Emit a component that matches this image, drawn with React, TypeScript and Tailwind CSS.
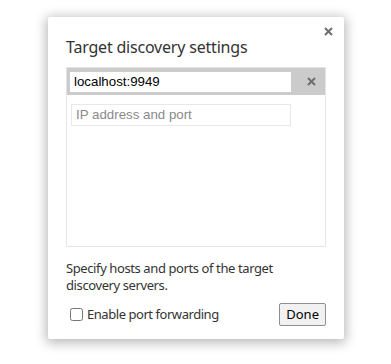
import React, { useState } from 'react';

const ui = { fontFamily: '"Noto Sans", "Open Sans", sans-serif' };
const arial = { fontFamily: '"Liberation Sans", Arial, sans-serif' };

export default function App() {
  const [forwarding, setForwarding] = useState(false);
  const [hosts, setHosts] = useState<string[]>(['localhost:9949']);

  return (
    <div className="w-[391px] h-[364px] bg-white pl-[48px] pt-[17px]" style={ui}>
      <div className="relative w-[296px] h-[322px] bg-white rounded-[2px] shadow-[0_2px_12px_2px_rgba(0,0,0,0.28)] px-[18px] pt-[20px]">
        <button className="absolute right-[10px] top-[8px] w-[12px] h-[12px] flex items-center justify-center text-[#6e6e6e]">
          <svg width="9" height="9" viewBox="0 0 9 9">
            <path d="M1 1 L8 8 M8 1 L1 8" stroke="currentColor" strokeWidth="2" />
          </svg>
        </button>
        <h2 className="text-[16px] leading-[20px] text-[#333] tracking-[-0.2px]">Target discovery settings</h2>
        <div className="mt-[10px] h-[180px] border border-[#e4e4e4]">
          {hosts.map((h, i) => (
            <div key={i} className="h-[27px] bg-[#cbcbcb] flex items-center pl-[3px]">
              <input
                value={h}
                onChange={(e) => setHosts(hosts.map((x, j) => (j === i ? e.target.value : x)))}
                className="w-[221px] h-[20px] bg-white px-[4px] text-[13.3px] text-black outline-none"
                style={arial}
              />
              <button
                onClick={() => setHosts(hosts.filter((_, j) => j !== i))}
                className="ml-[14px] w-[12px] h-[12px] flex items-center justify-center text-[#6e6e6e]"
              >
                <svg width="9" height="9" viewBox="0 0 9 9">
                  <path d="M1 1 L8 8 M8 1 L1 8" stroke="currentColor" strokeWidth="2" />
                </svg>
              </button>
            </div>
          ))}
          <div className="pl-[4px] pt-[6px]">
            <input
              placeholder="IP address and port"
              className="w-[220px] h-[22px] border border-[#e8e8e8] px-[4px] text-[13.3px] text-black placeholder:text-[#8a8a8a] outline-none"
              style={arial}
            />
          </div>
        </div>
        <p className="mt-[13px] text-[13px] leading-[17px] text-[#333] tracking-[-0.4px] w-[240px]">
          Specify hosts and ports of the target discovery servers.
        </p>
        <div className="mt-[9px] flex items-center justify-between">
          <label className="flex items-center ml-[4px] text-[13px] text-[#333] tracking-[-0.45px]">
            <input
              type="checkbox"
              checked={forwarding}
              onChange={(e) => setForwarding(e.target.checked)}
              className="w-[13px] h-[13px] m-0 mr-[4px]"
            />
            Enable port forwarding
          </label>
          <button className="h-[23px] px-[6px] border border-[#8f8f8f] rounded-[2px] bg-[#f1f1f1] text-[13px] text-black">
            Done
          </button>
        </div>
      </div>
    </div>
  );
}
